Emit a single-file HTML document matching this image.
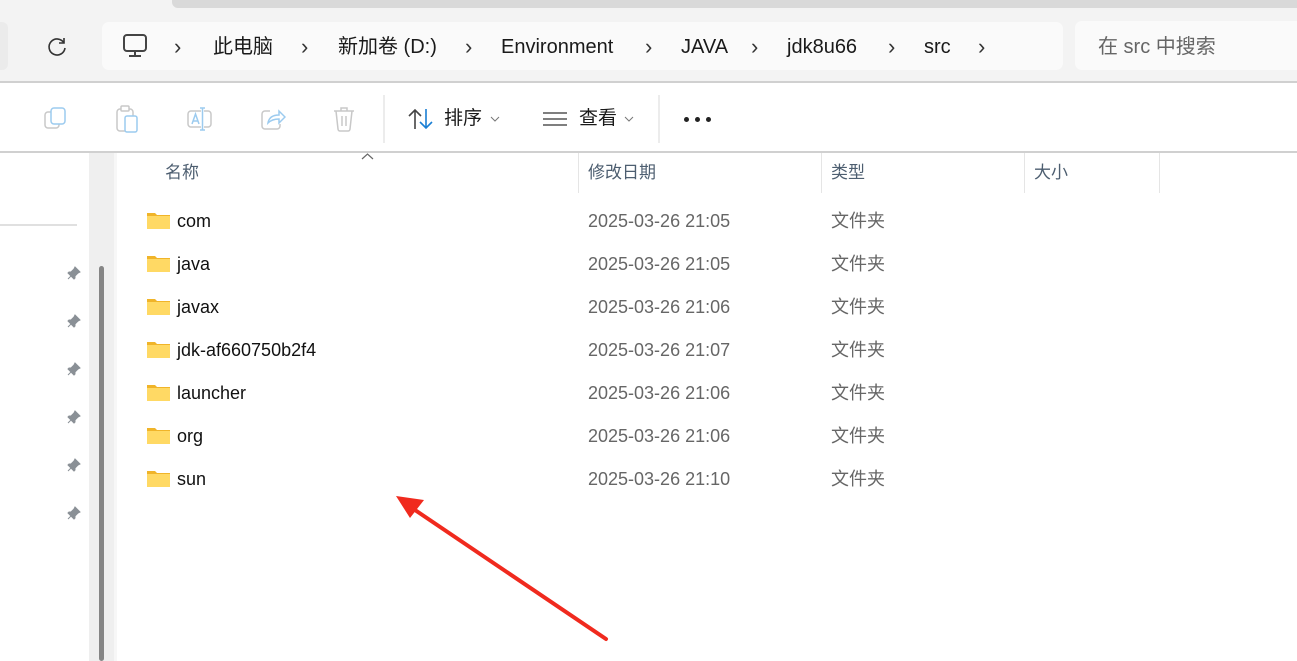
<!DOCTYPE html>
<html><head><meta charset="utf-8"><style>
*{margin:0;padding:0;box-sizing:border-box}
body{width:1297px;height:661px;overflow:hidden;background:#fff;font-family:"Liberation Sans","Noto Sans CJK SC",sans-serif;position:relative;color:#1a1a1a}
.a{position:absolute}
.row{position:absolute;left:147px;font-size:18px;height:24px;line-height:24px}
.row span{line-height:24px;height:24px}
.fold{position:absolute;left:0;top:3px;width:23px;height:17px}
.nm{position:absolute;left:30px;white-space:nowrap;color:#111}
.dt{position:absolute;left:441px;color:#666;white-space:nowrap}
.ty{position:absolute;left:684px;color:#666;white-space:nowrap}
.bc{position:absolute;top:33px;height:28px;line-height:28px;font-size:20px;color:#1a1a1a;white-space:nowrap}
.chev{position:absolute;top:33px;height:28px;line-height:28px;font-size:22px;color:#333}
.hd{position:absolute;top:161px;height:24px;line-height:24px;font-size:17px;color:#4d5e70}
.pin{position:absolute;left:67px;width:14px;height:14px}
</style></head><body>
<div class="a" style="left:0;top:0;width:1297px;height:82px;background:#f3f3f3"></div>
<div class="a" style="left:172px;top:0;width:1125px;height:8px;background:#d9d9d9;border-radius:0 0 0 6px"></div>
<div class="a" style="left:-6px;top:22px;width:14px;height:48px;background:#ebebeb;border-radius:6px"></div>
<svg class="a" style="left:46px;top:35px" width="22" height="22" viewBox="0 0 22 22"><path d="M18 8A8 8 0 1 0 19 13" fill="none" stroke="#333" stroke-width="1.6"/><path d="M18 3v5h-5" fill="none" stroke="#333" stroke-width="1.6"/></svg>
<div class="a" style="left:102px;top:22px;width:961px;height:48px;background:#fafafa;border-radius:7px"></div>
<svg class="a" style="left:122px;top:34px" width="26" height="24" viewBox="0 0 26 24"><rect x="2" y="1" width="22" height="16" rx="3" fill="none" stroke="#444" stroke-width="2"/><path d="M13 17v4M7 22h12" stroke="#444" stroke-width="2"/></svg>
<div class="chev" style="left:174px">›</div>
<div class="bc" style="left:213px">此电脑</div>
<div class="chev" style="left:301px">›</div>
<div class="bc" style="left:338px">新加卷 (D:)</div>
<div class="chev" style="left:465px">›</div>
<div class="bc" style="left:501px">Environment</div>
<div class="chev" style="left:645px">›</div>
<div class="bc" style="left:681px">JAVA</div>
<div class="chev" style="left:751px">›</div>
<div class="bc" style="left:787px">jdk8u66</div>
<div class="chev" style="left:888px">›</div>
<div class="bc" style="left:924px">src</div>
<div class="chev" style="left:978px">›</div>
<div class="a" style="left:1075px;top:21px;width:240px;height:49px;background:#fafafa;border-radius:7px"></div>
<div class="a" style="left:1098px;top:33px;height:28px;line-height:28px;font-size:20px;color:#666">在 src 中搜索</div>
<div class="a" style="left:0;top:81px;width:1297px;height:2px;background:#d0d0d0"></div>
<svg class="a" style="left:44px;top:106px" width="24" height="26" viewBox="0 0 24 26"><rect x="1" y="6" width="14" height="16" rx="3" fill="none" stroke="#c8c8c8" stroke-width="1.5"/><rect x="7" y="2" width="14" height="16" rx="3" fill="#fff" stroke="#9ccbef" stroke-width="1.5"/></svg>
<svg class="a" style="left:116px;top:105px" width="24" height="28" viewBox="0 0 24 28"><rect x="1" y="4" width="16" height="22" rx="3" fill="none" stroke="#c8c8c8" stroke-width="1.5"/><rect x="5" y="1" width="8" height="5" rx="1" fill="#fff" stroke="#c8c8c8" stroke-width="1.5"/><rect x="9" y="11" width="12" height="16" rx="2" fill="#fff" stroke="#9ccbef" stroke-width="1.5"/></svg>
<svg class="a" style="left:187px;top:106px" width="26" height="26" viewBox="0 0 26 26"><rect x="1" y="5" width="23" height="16" rx="3" fill="none" stroke="#c8c8c8" stroke-width="1.5"/><rect x="14" y="2" width="3" height="22" fill="#fff"/><path d="M15.5 2v22M13 2h5M13 24h5" stroke="#9ccbef" stroke-width="1.5"/><path d="M5 18l3.5-10 3.5 10M6 15h5" fill="none" stroke="#9ccbef" stroke-width="1.5"/></svg>
<svg class="a" style="left:260px;top:107px" width="26" height="24" viewBox="0 0 26 24"><path d="M10 4H5a3 3 0 0 0-3 3v12a3 3 0 0 0 3 3h12a3 3 0 0 0 3-3v-2" fill="none" stroke="#c8c8c8" stroke-width="1.5"/><path d="M8 16c1-6 5-8 11-8V4l6 6-6 6v-4c-5 0-8 1-11 4z" fill="#fff" stroke="#9ccbef" stroke-width="1.5"/></svg>
<svg class="a" style="left:333px;top:106px" width="22" height="26" viewBox="0 0 22 26"><path d="M1 5h20M8 5V2h6v3M3 5l2 18a2 2 0 0 0 2 2h8a2 2 0 0 0 2-2l2-18M9 10v10M13 10v10" fill="none" stroke="#c8c8c8" stroke-width="1.5"/></svg>
<div class="a" style="left:383px;top:95px;width:2px;height:48px;background:#ececec"></div>
<svg class="a" style="left:408px;top:108px" width="26" height="22" viewBox="0 0 26 22"><path d="M7 21V2M1 8l6-6 6 6" fill="none" stroke="#444" stroke-width="1.6"/><path d="M18 1v19M12 14l6 6 6-6" fill="none" stroke="#1a7fd4" stroke-width="1.6"/></svg>
<div class="a" style="left:444px;top:105px;height:28px;line-height:28px;font-size:19px">排序</div>
<svg class="a" style="left:490px;top:116px" width="10" height="6"><path d="M1 1l4 4 4-4" fill="none" stroke="#777" stroke-width="1"/></svg>
<svg class="a" style="left:543px;top:111px" width="24" height="16"><path d="M0 2h24M0 8h24M0 14h24" stroke="#555" stroke-width="1.6"/></svg>
<div class="a" style="left:579px;top:105px;height:28px;line-height:28px;font-size:19px">查看</div>
<svg class="a" style="left:624px;top:116px" width="10" height="6"><path d="M1 1l4 4 4-4" fill="none" stroke="#777" stroke-width="1"/></svg>
<div class="a" style="left:658px;top:95px;width:2px;height:48px;background:#ececec"></div>
<div class="a" style="left:684px;top:117px;width:5px;height:5px;border-radius:50%;background:#222;box-shadow:11px 0 #222,22px 0 #222"></div>
<div class="a" style="left:0;top:151px;width:1297px;height:2px;background:#d0d0d0"></div>
<div class="a" style="left:0;top:224px;width:77px;height:2px;background:#e0e0e0"></div>
<div class="a" style="left:89px;top:153px;width:25px;height:508px;background:#efefef"></div>
<div class="a" style="left:114px;top:153px;width:3px;height:508px;background:#f7f7f7"></div>
<div class="a" style="left:99px;top:266px;width:5px;height:395px;background:#858585;border-radius:3px"></div>
<svg class="pin" style="top:266px" viewBox="0 0 14 14"><path d="M8 1l5 5-2 1-3 3 0 2-1 1-6-6 1-1 2 0 3-3z M4 10l-3 3" fill="#8a9096" stroke="#8a9096" stroke-width="1"/></svg>
<svg class="pin" style="top:314px" viewBox="0 0 14 14"><path d="M8 1l5 5-2 1-3 3 0 2-1 1-6-6 1-1 2 0 3-3z M4 10l-3 3" fill="#8a9096" stroke="#8a9096" stroke-width="1"/></svg>
<svg class="pin" style="top:362px" viewBox="0 0 14 14"><path d="M8 1l5 5-2 1-3 3 0 2-1 1-6-6 1-1 2 0 3-3z M4 10l-3 3" fill="#8a9096" stroke="#8a9096" stroke-width="1"/></svg>
<svg class="pin" style="top:410px" viewBox="0 0 14 14"><path d="M8 1l5 5-2 1-3 3 0 2-1 1-6-6 1-1 2 0 3-3z M4 10l-3 3" fill="#8a9096" stroke="#8a9096" stroke-width="1"/></svg>
<svg class="pin" style="top:458px" viewBox="0 0 14 14"><path d="M8 1l5 5-2 1-3 3 0 2-1 1-6-6 1-1 2 0 3-3z M4 10l-3 3" fill="#8a9096" stroke="#8a9096" stroke-width="1"/></svg>
<svg class="pin" style="top:506px" viewBox="0 0 14 14"><path d="M8 1l5 5-2 1-3 3 0 2-1 1-6-6 1-1 2 0 3-3z M4 10l-3 3" fill="#8a9096" stroke="#8a9096" stroke-width="1"/></svg>
<svg class="a" style="left:361px;top:152px" width="13" height="8"><path d="M1 7l5.5-5 5.5 5" fill="none" stroke="#666" stroke-width="1.2"/></svg>
<div class="hd" style="left:165px">名称</div>
<div class="a" style="left:578px;top:153px;width:1px;height:40px;background:#e5e5e5"></div>
<div class="hd" style="left:588px">修改日期</div>
<div class="a" style="left:821px;top:153px;width:1px;height:40px;background:#e5e5e5"></div>
<div class="hd" style="left:831px">类型</div>
<div class="a" style="left:1024px;top:153px;width:1px;height:40px;background:#e5e5e5"></div>
<div class="hd" style="left:1034px">大小</div>
<div class="a" style="left:1159px;top:153px;width:1px;height:40px;background:#e5e5e5"></div>
<div class="row" style="top:209px"><svg class="fold" viewBox="0 0 23 17"><path d="M0 1h8l2 2h13v14H0z" fill="#f0b429"/><rect x="0" y="4" width="23" height="13" fill="#ffd964"/></svg><span class="nm">com</span><span class="dt">2025-03-26 21:05</span><span class="ty">文件夹</span></div>
<div class="row" style="top:252px"><svg class="fold" viewBox="0 0 23 17"><path d="M0 1h8l2 2h13v14H0z" fill="#f0b429"/><rect x="0" y="4" width="23" height="13" fill="#ffd964"/></svg><span class="nm">java</span><span class="dt">2025-03-26 21:05</span><span class="ty">文件夹</span></div>
<div class="row" style="top:295px"><svg class="fold" viewBox="0 0 23 17"><path d="M0 1h8l2 2h13v14H0z" fill="#f0b429"/><rect x="0" y="4" width="23" height="13" fill="#ffd964"/></svg><span class="nm">javax</span><span class="dt">2025-03-26 21:06</span><span class="ty">文件夹</span></div>
<div class="row" style="top:338px"><svg class="fold" viewBox="0 0 23 17"><path d="M0 1h8l2 2h13v14H0z" fill="#f0b429"/><rect x="0" y="4" width="23" height="13" fill="#ffd964"/></svg><span class="nm">jdk-af660750b2f4</span><span class="dt">2025-03-26 21:07</span><span class="ty">文件夹</span></div>
<div class="row" style="top:381px"><svg class="fold" viewBox="0 0 23 17"><path d="M0 1h8l2 2h13v14H0z" fill="#f0b429"/><rect x="0" y="4" width="23" height="13" fill="#ffd964"/></svg><span class="nm">launcher</span><span class="dt">2025-03-26 21:06</span><span class="ty">文件夹</span></div>
<div class="row" style="top:424px"><svg class="fold" viewBox="0 0 23 17"><path d="M0 1h8l2 2h13v14H0z" fill="#f0b429"/><rect x="0" y="4" width="23" height="13" fill="#ffd964"/></svg><span class="nm">org</span><span class="dt">2025-03-26 21:06</span><span class="ty">文件夹</span></div>
<div class="row" style="top:467px"><svg class="fold" viewBox="0 0 23 17"><path d="M0 1h8l2 2h13v14H0z" fill="#f0b429"/><rect x="0" y="4" width="23" height="13" fill="#ffd964"/></svg><span class="nm">sun</span><span class="dt">2025-03-26 21:10</span><span class="ty">文件夹</span></div>
<svg class="a" style="left:0;top:0" width="1297" height="661"><path d="M606 639L412 508" stroke="#f02a1e" stroke-width="4" stroke-linecap="round"/><path d="M396 496L424 500L410 518z" fill="#f02a1e"/></svg>
</body></html>
